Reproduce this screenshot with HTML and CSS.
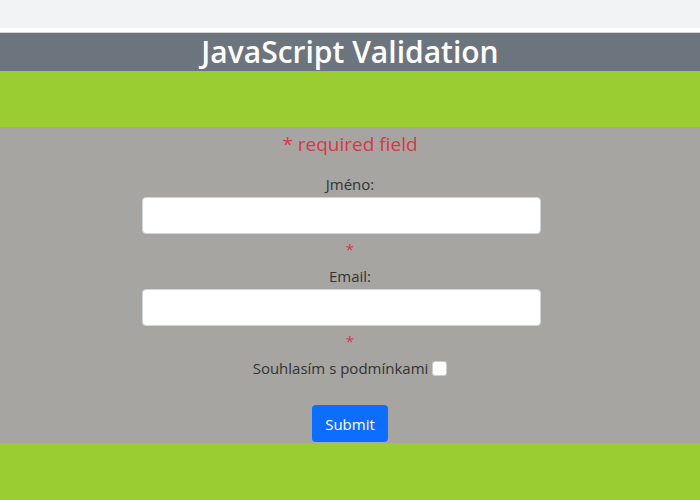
FILE: index.html
```html
<!DOCTYPE html>
<html lang="cs">
<head>
<meta charset="utf-8">
<title>JavaScript Validation</title>
<link rel="stylesheet" href="styles.css">
</head>
<body>
<div class="topbar"></div>
<div class="gap"></div>
<header class="header"><h1>JavaScript Validation</h1></header>
<div class="band"></div>
<main class="content">
  <p class="required">* required field</p>
  <form class="form">
    <label class="label" for="jmeno">Jméno:</label>
    <input class="input" type="text" id="jmeno">
    <span class="star">*</span>
    <label class="label" for="email">Email:</label>
    <input class="input" type="text" id="email">
    <span class="star">*</span>
    <div class="agree"><span>Souhlasím s podmínkami</span><span class="check"></span></div>
    <button class="btn" type="button">Submit</button>
  </form>
</main>
<div class="footer"></div>
</body>
</html>
```
FILE: styles.css
```css
* { box-sizing: border-box; }
body {
  margin: 0;
  font-family: "Open Sans", "Noto Sans", sans-serif;
  color: #333;
  background: #9acd32;
}
.topbar { height: 28px; background: #f2f3f5; }
.gap { background: #fff; border-bottom: 1px solid #d6d6d6; height: 5px; }
.header {
  background: #6c757d;
  height: 38px;
  display: flex;
  justify-content: center;
  align-items: center;
}
.header h1 {
  margin: 0;
  color: #fff;
  font-size: 30px;
  font-weight: 600;
  line-height: 38px;
}
.band { height: 56px; background: #9acd32; }
.content {
  background: #a6a5a2;
  padding-top: 4px;
  padding-bottom: 1px;
  display: flex;
  flex-direction: column;
  align-items: center;
}
.required {
  margin: 0;
  color: #dc3545;
  font-size: 19px;
  line-height: 26px;
}
.form {
  display: flex;
  flex-direction: column;
  align-items: center;
  margin-top: 11px;
}
.label { font-size: 15px; line-height: 22px; margin-top: 5px; margin-bottom: 2px; }
.input {
  width: 399px;
  height: 37px;
  margin-right: 18px;
  border: 1px solid #ced4da;
  border-radius: 4px;
  background: #fff;
}
.star { color: #dc3545; font-size: 15px; line-height: 22px; margin-top: 4px; }
.agree {
  display: flex;
  align-items: center;
  gap: 4px;
  font-size: 15px;
  line-height: 22px;
  margin-top: 5px;
}
.check {
  width: 15px;
  height: 15px;
  background: #fff;
  border: 1px solid #ccc;
  border-radius: 3px;
}
.btn {
  margin-top: 26px;
  background: #0d6efd;
  color: #fff;
  border: none;
  border-radius: 4px;
  font-family: inherit;
  font-size: 15px;
  width: 76px;
  height: 37px;
  padding: 0;
}
.footer { height: 58px; }
```
